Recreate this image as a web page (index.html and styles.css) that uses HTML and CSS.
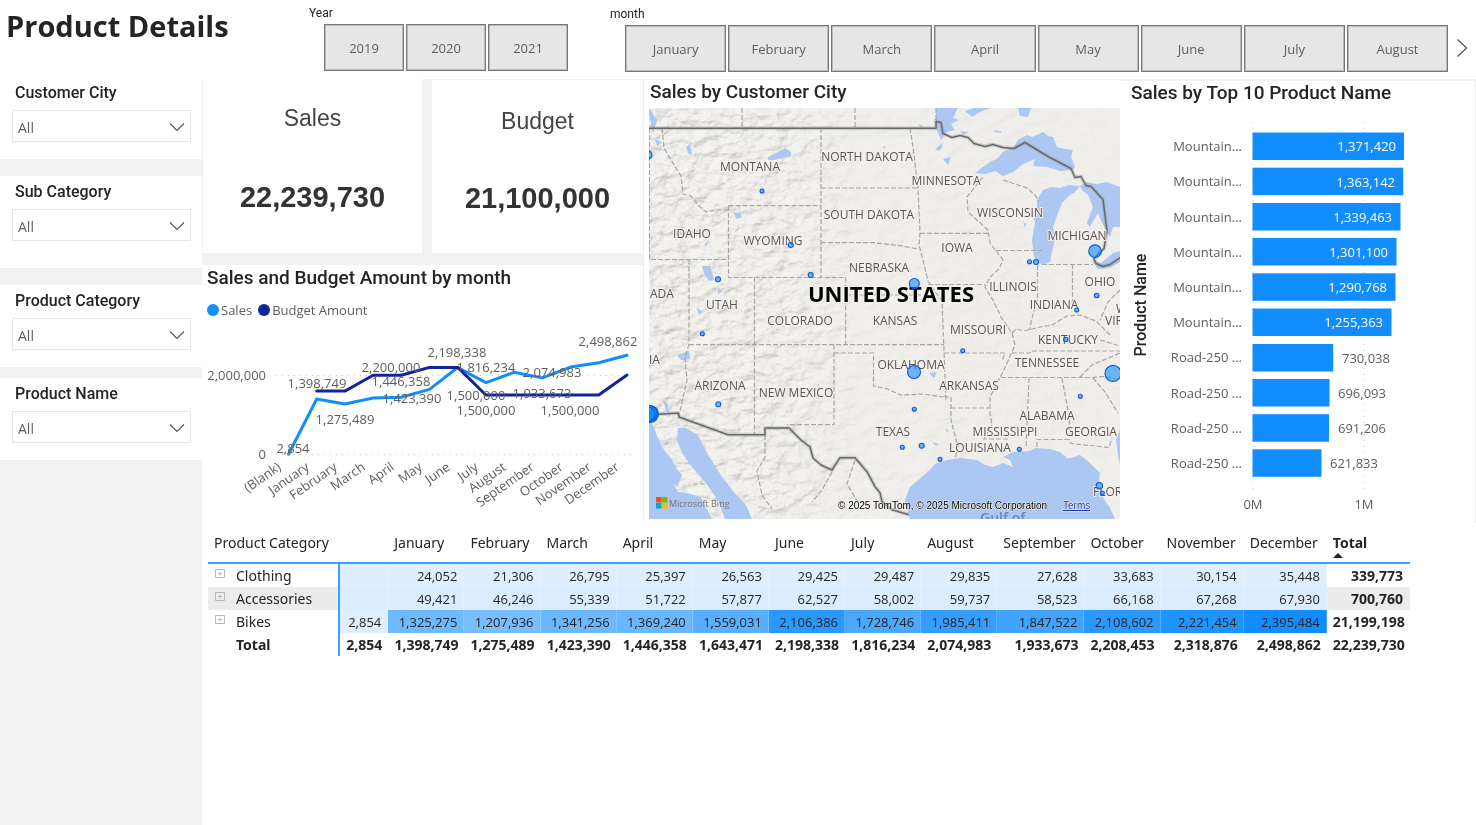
FILE: index.html
```html
<!DOCTYPE html>
<html lang="en">
<head>
<meta charset="utf-8">
<meta name="viewport" content="width=device-width, initial-scale=1">
<title>Product Details</title>
<link rel="stylesheet" href="styles.css">
</head>
<body>
<div class="page">
  <header class="topbar">
    <h1 class="page-title">Product Details</h1>
    <section class="tiles tiles-year" aria-labelledby="year-label">
      <h2 class="tiles-label" id="year-label">Year</h2>
      <div class="tile-row">
        <button type="button" class="tile">2019</button>
        <button type="button" class="tile">2020</button>
        <button type="button" class="tile">2021</button>
      </div>
    </section>
    <section class="tiles tiles-month" aria-labelledby="month-label">
      <h2 class="tiles-label" id="month-label">month</h2>
      <div class="tile-row">
        <button type="button" class="tile">January</button>
        <button type="button" class="tile">February</button>
        <button type="button" class="tile">March</button>
        <button type="button" class="tile">April</button>
        <button type="button" class="tile">May</button>
        <button type="button" class="tile">June</button>
        <button type="button" class="tile">July</button>
        <button type="button" class="tile">August</button>
        <button type="button" class="next" aria-label="Next months"><svg width="12" height="20" viewBox="0 0 12 20"><path d="M1.5 1.500 10.500 10 1.500 18.500" fill="none" stroke="#555" stroke-width="1.200"/></svg></button>
      </div>
    </section>
  </header>

  <aside class="sidebar">
    <div class="filter">
      <label for="f-city">Customer City</label>
      <div class="pick"><select id="f-city"><option>All</option></select><svg class="chev" width="16" height="10" viewBox="0 0 16 10"><path d="M1 1.500 8 8.500 15 1.500" fill="none" stroke="#555" stroke-width="1.100"/></svg></div>
    </div>
    <div class="filter filter-tall">
      <label for="f-sub">Sub Category</label>
      <div class="pick"><select id="f-sub"><option>All</option></select><svg class="chev" width="16" height="10" viewBox="0 0 16 10"><path d="M1 1.500 8 8.500 15 1.500" fill="none" stroke="#555" stroke-width="1.100"/></svg></div>
    </div>
    <div class="filter filter-close">
      <label for="f-cat">Product Category</label>
      <div class="pick"><select id="f-cat"><option>All</option></select><svg class="chev" width="16" height="10" viewBox="0 0 16 10"><path d="M1 1.500 8 8.500 15 1.500" fill="none" stroke="#555" stroke-width="1.100"/></svg></div>
    </div>
    <div class="filter">
      <label for="f-name">Product Name</label>
      <div class="pick"><select id="f-name"><option>All</option></select><svg class="chev" width="16" height="10" viewBox="0 0 16 10"><path d="M1 1.500 8 8.500 15 1.500" fill="none" stroke="#555" stroke-width="1.100"/></svg></div>
    </div>
  </aside>

  <main class="content">
    <div class="visuals">
      <div class="col-left">
        <div class="cards">
          <div class="card"><span class="card-label">Sales</span><strong class="card-value">22,239,730</strong></div>
          <div class="card card-lined"><span class="card-label">Budget</span><strong class="card-value">21,100,000</strong></div>
        </div>
        <section class="trend">
          <h2 class="visual-title">Sales and Budget Amount by month</h2>
          <div class="legend">
            <span class="key key-sales">Sales</span>
            <span class="key key-budget">Budget Amount</span>
          </div>
          <svg class="chart" viewBox="202 325 441 198" role="img" aria-label="Sales and budget by month">
            <g class="gridline"><path d="M276 375.500H636M276 454.500H636"/></g>
            <polyline class="line line-sales" points="288.500,454.200 316.700,399 344.900,404 373.100,398 401.300,397.200 429.500,389.400 457.700,367.500 485.900,382.600 514.100,372.300 542.300,377.900 570.500,367.100 598.700,362.700 627,355.300"/>
            <polyline class="line line-budget" points="316.700,391.100 344.900,391.100 373.100,375.300 401.300,375.300 429.500,367.400 457.700,367.400 485.900,395 598.700,395 627,375"/>
            <g class="num" text-anchor="end"><text x="266" y="380">2,000,000</text><text x="266" y="459">0</text></g>
            <g class="num" text-anchor="middle">
              <text x="293" y="453">2,854</text><text x="317" y="388">1,398,749</text><text x="345" y="424">1,275,489</text>
              <text x="391" y="372">2,200,000</text><text x="401" y="386">1,446,358</text><text x="412" y="403">1,423,390</text>
              <text x="457" y="357">2,198,338</text><text x="486" y="372">1,816,234</text><text x="476" y="400">1,500,000</text>
              <text x="486" y="415">1,500,000</text><text x="552" y="377">2,074,983</text><text x="542" y="398">1,933,673</text>
              <text x="570" y="415">1,500,000</text><text x="608" y="346">2,498,862</text>
            </g>
            <g class="num" text-anchor="end">
              <text transform="translate(282 469) rotate(-35)">(Blank)</text>
              <text transform="translate(310 469) rotate(-35)">January</text>
              <text transform="translate(338 469) rotate(-35)">February</text>
              <text transform="translate(366 469) rotate(-35)">March</text>
              <text transform="translate(395 469) rotate(-35)">April</text>
              <text transform="translate(423 469) rotate(-35)">May</text>
              <text transform="translate(451 469) rotate(-35)">June</text>
              <text transform="translate(479 469) rotate(-35)">July</text>
              <text transform="translate(507 469) rotate(-35)">August</text>
              <text transform="translate(535 469) rotate(-35)">September</text>
              <text transform="translate(564 469) rotate(-35)">October</text>
              <text transform="translate(592 469) rotate(-35)">November</text>
              <text transform="translate(620 469) rotate(-35)">December</text>
            </g>
          </svg>
        </section>
      </div>

      <section class="map">
        <h2 class="visual-title">Sales by Customer City</h2>
        <svg class="chart" viewBox="649 108 471 411" role="img" aria-label="Map of sales by customer city">
          <defs>
            <filter id="relief" x="0" y="0" width="100%" height="100%">
              <feTurbulence type="fractalNoise" baseFrequency="0.06 0.09" numOctaves="4" seed="8"/>
              <feDiffuseLighting surfaceScale="6" lighting-color="#ffffff"><feDistantLight azimuth="225" elevation="60"/></feDiffuseLighting>
            </filter>
            <linearGradient id="west" x1="0" x2="1" y1="0" y2="0"><stop offset="0" stop-color="#fff"/><stop offset=".3" stop-color="#ccc"/><stop offset=".45" stop-color="#333"/><stop offset="1" stop-color="#1a1a1a"/></linearGradient>
            <mask id="west-mask"><rect x="649" y="108" width="471" height="411" fill="url(#west)"/></mask>
          </defs>
          <rect x="649" y="108" width="471" height="411" fill="#f1efeb"/>
          <g mask="url(#west-mask)"><rect class="relief" x="649" y="108" width="471" height="411" filter="url(#relief)"/></g>
          <g fill="#abc7f2">
            <path d="M975 173l8-6 7-5 8-4 5-6 10-5 6-8 8-4 5 2 11-5 5 4 5 1 4 10 8 2 8 1-2 7 4 10-3 3-12 1-13-4-14-1 2-7-12 5-10 8-10 4-8-5-10 3z"/>
            <path d="M1037 200l6-10 8-3 9 1 9-3 11 1-5 6-5 3-8 8-4 10-5 14 2 12-2 8-3 15-8 3-8-8-2-17 3-17-2-10 4-6z"/>
            <path d="M1080 186l7-4 10 2 10-2 13 5v40h-7l-3 10-8-14-4-10-8 14-3-4 6-16-5-12-6-5z"/>
            <path d="M1092 260l9 3 12-10 7-2v11l-10 6-12 1z"/>
            <path d="M910 519l-5-19 5-13 20-17 5-6 12-4 13-2 17 2 8 5 8 2 10-4 10 4-3-7-7-3 10-5 17-1 5-3 15 1 10 3 7 6 4 0 9-3 10 8 10 10-2 14 4 9 8 12 5 11z"/>
            <path d="M1120 430l-4 9 2 16 2 10zM649 420l4 5 3 8 6 14 10 13 5 9 5 6-5 12-4-4 5 9 9 1 14 4 5 11 6 11h-64zM678 428l8 0 12 7 9 18 15 24 16 20 8 8 6 14h-27l-7-19-13-18-13-15-10-14-5-13z"/>
            <path d="M768 157l10-5 7-4 6 4v4l-8 2-10 2-5 0zM686 147l4-3 2 11-4-2zM655 139l7 4-5 3zM702 266l8 0 3 10 1 4-5 1-5-8zM734 213l6 0 2 4-6 2zM677 355l12-4 1 8-9 1zM704 244l5-3-3 5zM718 289l5 2-5 3zM697 308l6 4-4 3zM663 400l5 4 2 13-4-7zM649 108l8 12-4 14-4-20z"/>
            <path d="M936 108l22 0-5 10 6 2-8 4 4 6-8 2-6 8-5-12zM965 111l9-3 16 0-12 5-6 4zM1018 108l13 0-3 9-8-1zM935 149l7-6 0 5-3 3zM943 159l8-2-3 8zM960 131l9 1-6 3zM994 130l6 1 2 2-7-1zM1023 221l3 3-1 4zM929 373l8-1-3 6zM945 430l4 3-2-4zM932 442l7 2-3 2zM919 124l4 2-3 2zM883 146l3 1-2 2z"/>
          </g>
          <g class="state">
            <path d="M649.500 128V259.500H728.500M728.500 205.700V277.500H846M728.500 205.700H821M821 128V277.500M821 188H918M821 242.700H873l9 1 18 2 17 3M662 128l2 20 7 12 10 16 2 18 8 2 7 9 8 7 9-2 14 0M742 108V128M855 108V128M936 108V121"/>
            <path d="M689 259.500V344.700M754.500 277.500V434M689 344.700H944M845.700 277.500V344.700M846 295H936M834 344.700V424.700H787M834 353H873.500V386l14 3 13 6 23-1 20 3M689 344l-4 14 2 22-4 18-4 18"/>
            <path d="M910 128l3 19 5 41 2 45-1 12 4 15 5 21 8 12 6 8 2 50 2 50M920 233.300H988M928 284.500H985M944 353H1005l-3 8M951 397v23l7 27-3 12M951 408H989M944 396l7 2"/>
            <path d="M983 177l-16 20 1 15 20 18 2 13 13 17-4 9-9 8-5 10 8 13 8 17 11 16 3 12-8 18-7 15-10 19 0 16 2 12-8 14h25M1003 180l24 8 8 7 4 6M996 250.500H1042M1037.500 265V300l-6 20-2 10M1042 264.500H1093M1072.500 264V304M1120 290l-12 12-8 18"/>
            <path d="M1012 333l4-4 8 2 16-4 12-2 15-9 13-1 16 6 8 8 6 6M1012 353h18l2-2H1120M1001 377.500H1093l10-1 17 3M1029 378l-3 70M1062 378l7 38 1 20M1037 447v-7.500H1069l2 4 38 4 3-9M1093 378l12 14 13 21M1080 377l12-12 28-12M1100 340l20 6"/>
            <path d="M765 435v22l-8 14 5 24 10 14M832 472l-10 18-10 12M693 484h14M855 460l-8 24 12 20"/>
          </g>
          <path class="border-glow" d="M649 128.300H936V121.500l5 1 2 11 9 4 8-2 8 2 6 6 11 3 8-2 10 3 11 1 11-6 23 14 23 12 4 9 6-1 5 9 5 1 12 13 4 32-3 17-10 10 2 5 7 3 7-2 12-8M649 415l29-2 1 4 49 17.700h37v-6.700h24l12 12 9 7 3 11 8 7 11 5 8-12.300h15l12 14 8 15 5 6 2 9 10 8 17 5"/>
          <path class="border" d="M649 128.300H936V121.500l5 1 2 11 9 4 8-2 8 2 6 6 11 3 8-2 10 3 11 1 11-6 23 14 23 12 4 9 6-1 5 9 5 1 12 13 4 32-3 17-10 10 2 5 7 3 7-2 12-8M649 415l29-2 1 4 49 17.700h37v-6.700h24l12 12 9 7 3 11 8 7 11 5 8-12.300h15l12 14 8 15 5 6 2 9 10 8 17 5"/>
          <g class="place" text-anchor="middle">
            <text x="750" y="171">MONTANA</text><text x="867" y="161">NORTH DAKOTA</text><text x="869" y="219">SOUTH DAKOTA</text>
            <text x="946" y="185">MINNESOTA</text><text x="1010" y="217">WISCONSIN</text><text x="1077" y="240">MICHIGAN</text>
            <text x="692" y="238">IDAHO</text><text x="773" y="245">WYOMING</text><text x="957" y="252">IOWA</text>
            <text x="879" y="272">NEBRASKA</text><text x="1013" y="291">ILLINOIS</text><text x="1100" y="286">OHIO</text>
            <text x="722" y="309">UTAH</text><text x="800" y="325">COLORADO</text><text x="895" y="325">KANSAS</text>
            <text x="978" y="334">MISSOURI</text><text x="1054" y="309">INDIANA</text><text x="1068" y="344">KENTUCKY</text>
            <text x="911" y="369">OKLAHOMA</text><text x="1047" y="367">TENNESSEE</text><text x="969" y="390">ARKANSAS</text>
            <text x="720" y="390">ARIZONA</text><text x="796" y="397">NEW MEXICO</text><text x="1047" y="420">ALABAMA</text>
            <text x="893" y="436">TEXAS</text><text x="1005" y="436">MISSISSIPPI</text><text x="1091" y="436">GEORGIA</text><text x="980" y="452">LOUISIANA</text>
          </g>
          <g class="place"><text x="650" y="298">ADA</text><text x="649" y="364">IA</text><text x="1105" y="325">VIRGINIA</text><text x="1116" y="313">W</text><text x="1093" y="496">FLORIDA</text></g>
          <text class="sea" x="980" y="523">Gulf of</text>
          <text class="country" x="891" y="302" text-anchor="middle">UNITED STATES</text>
          <g class="bubble">
            <circle cx="648" cy="155" r="4"/><circle cx="762" cy="191" r="2"/><circle cx="790.700" cy="245" r="2.500"/><circle cx="810.700" cy="275" r="2.500"/><circle cx="718" cy="279.300" r="2.500"/>
            <circle cx="1095" cy="251.200" r="6.300"/><circle cx="1029.500" cy="261.700" r="2"/><circle cx="1036" cy="262" r="2.500"/><circle cx="914.300" cy="283.500" r="5"/><circle cx="1096.700" cy="295.500" r="2.300"/>
            <circle cx="702.300" cy="333.700" r="2"/><circle cx="718.300" cy="404.300" r="2.500"/><circle cx="1076.700" cy="310" r="2"/><circle cx="1065.700" cy="339.500" r="2.200"/><circle cx="962.700" cy="350.700" r="2"/>
            <circle cx="914" cy="372" r="6.500"/><circle cx="1113" cy="373.400" r="8"/><circle cx="1080.300" cy="396.300" r="2"/><circle cx="914.300" cy="409.300" r="2"/><circle cx="902.300" cy="447.300" r="2"/>
            <circle cx="921.700" cy="445.700" r="2.500"/><circle cx="940" cy="459.300" r="2"/><circle cx="1019.300" cy="449.300" r="2"/><circle cx="1099.300" cy="485.700" r="3.200"/><circle cx="1102.300" cy="493" r="2"/>
            <g fill-opacity="1"><circle cx="650" cy="414" r="8.500"/><circle cx="649" cy="413.500" r="8"/><circle cx="648" cy="414" r="7"/></g>
          </g>
          <g><path fill="#f25022" d="M656 497h5.500v5.500H656z"/><path fill="#7fba00" d="M662 497h5.500v5.500H662z"/><path fill="#00a4ef" d="M656 503h5.500v5.500H656z"/><path fill="#ffb900" d="M662 503h5.500v5.500H662z"/></g>
          <text class="bing" x="669" y="507">Microsoft Bing</text>
          <text class="credit" x="838" y="509">© 2025 TomTom, © 2025 Microsoft Corporation</text>
          <a href="#terms"><text class="credit terms" x="1063" y="509">Terms</text></a>
        </svg>
      </section>

      <section class="top10">
        <h2 class="visual-title">Sales by Top 10 Product Name</h2>
        <svg class="chart" viewBox="1120 109 355 411" role="img" aria-label="Sales by top 10 product name">
          <g class="gridline"><path d="M1253 122V494M1364 122V494"/></g>
          <g class="bar">
            <rect x="1252.500" y="132.500" width="151.500" height="27.500"/><rect x="1252.500" y="167.700" width="150.700" height="27.500"/>
            <rect x="1252.500" y="203" width="148" height="27.500"/><rect x="1252.500" y="238" width="144" height="27.500"/>
            <rect x="1252.500" y="273.300" width="143" height="27.500"/><rect x="1252.500" y="308.500" width="139" height="27.500"/>
            <rect x="1252.500" y="344" width="80.700" height="27.500"/><rect x="1252.500" y="379" width="77" height="27.500"/>
            <rect x="1252.500" y="414.200" width="76.500" height="27.500"/><rect x="1252.500" y="449.300" width="69" height="27.500"/>
          </g>
          <g class="num num-in" text-anchor="end"><text x="1396" y="151">1,371,420</text><text x="1395" y="187">1,363,142</text><text x="1392" y="222">1,339,463</text><text x="1388" y="257">1,301,100</text><text x="1387" y="292">1,290,768</text><text x="1383" y="327">1,255,363</text></g>
          <g class="num"><text x="1342" y="363">730,038</text><text x="1338" y="398">696,093</text><text x="1338" y="433">691,206</text><text x="1330" y="468">621,833</text></g>
          <g class="num" text-anchor="end"><text x="1242" y="151">Mountain...</text><text x="1242" y="186">Mountain...</text><text x="1242" y="222">Mountain...</text><text x="1242" y="257">Mountain...</text><text x="1242" y="292">Mountain...</text><text x="1242" y="327">Mountain...</text><text x="1242" y="362">Road-250 ...</text><text x="1242" y="398">Road-250 ...</text><text x="1242" y="433">Road-250 ...</text><text x="1242" y="468">Road-250 ...</text></g>
          <g class="num" text-anchor="middle"><text x="1253" y="509">0M</text><text x="1364" y="509">1M</text></g>
          <text class="axis-title" transform="translate(1146 305) rotate(-90)" text-anchor="middle">Product Name</text>
        </svg>
      </section>
    </div>

    <table class="matrix">
      <colgroup><col class="c-cat"><col class="c-blank"><col span="8" class="c-month"><col class="c-sep"><col class="c-month"><col class="c-wide"><col class="c-wide"><col class="c-wide"></colgroup>
      <thead>
        <tr><th scope="col">Product Category</th><th></th><th scope="col">January</th><th scope="col">February</th><th scope="col">March</th><th scope="col">April</th><th scope="col">May</th><th scope="col">June</th><th scope="col">July</th><th scope="col">August</th><th scope="col">September</th><th scope="col">October</th><th scope="col">November</th><th scope="col">December</th><th scope="col" class="sorted">Total</th></tr>
      </thead>
      <tbody>
        <tr><th scope="row"><button type="button" class="expand" aria-label="Expand Clothing"><svg width="10" height="9" viewBox="0 0 10 9"><path d="M.5.500h9v8h-9zM5 2.500v4M3 4.500h4" fill="none" stroke="#b8b8b8"/></svg></button>Clothing</th><td></td><td>24,052</td><td>21,306</td><td>26,795</td><td>25,397</td><td>26,563</td><td>29,425</td><td>29,487</td><td>29,835</td><td>27,628</td><td>33,683</td><td>30,154</td><td>35,448</td><td>339,773</td></tr>
        <tr class="alt"><th scope="row"><button type="button" class="expand" aria-label="Expand Accessories"><svg width="10" height="9" viewBox="0 0 10 9"><path d="M.5.500h9v8h-9zM5 2.500v4M3 4.500h4" fill="none" stroke="#b8b8b8"/></svg></button>Accessories</th><td></td><td>49,421</td><td>46,246</td><td>55,339</td><td>51,722</td><td>57,877</td><td>62,527</td><td>58,002</td><td>59,737</td><td>58,523</td><td>66,168</td><td>67,268</td><td>67,930</td><td>700,760</td></tr>
        <tr><th scope="row"><button type="button" class="expand" aria-label="Expand Bikes"><svg width="10" height="9" viewBox="0 0 10 9"><path d="M.5.500h9v8h-9zM5 2.500v4M3 4.500h4" fill="none" stroke="#b8b8b8"/></svg></button>Bikes</th><td>2,854</td><td style="--heat:55%">1,325,275</td><td style="--heat:50%">1,207,936</td><td style="--heat:56%">1,341,256</td><td style="--heat:57%">1,369,240</td><td style="--heat:65%">1,559,031</td><td style="--heat:88%">2,106,386</td><td style="--heat:72%">1,728,746</td><td style="--heat:83%">1,985,411</td><td style="--heat:77%">1,847,522</td><td style="--heat:88%">2,108,602</td><td style="--heat:93%">2,221,454</td><td style="--heat:100%">2,395,484</td><td>21,199,198</td></tr>
      </tbody>
      <tfoot>
        <tr><th scope="row">Total</th><td>2,854</td><td>1,398,749</td><td>1,275,489</td><td>1,423,390</td><td>1,446,358</td><td>1,643,471</td><td>2,198,338</td><td>1,816,234</td><td>2,074,983</td><td>1,933,673</td><td>2,208,453</td><td>2,318,876</td><td>2,498,862</td><td>22,239,730</td></tr>
      </tfoot>
    </table>
  </main>
</div>
</body>
</html>
```

FILE: styles.css
```css
* { box-sizing: border-box; }

body {
  margin: 0;
  background: #fff;
  color: #252423;
  font-family: "Open Sans", "Noto Sans", sans-serif;
  font-size: 14px;
}

h1, h2 { margin: 0; }

.page {
  display: grid;
  grid-template-columns: 202px 1fr;
  grid-template-rows: auto 1fr;
  min-height: 100vh;
}

/* Header with the tile slicers */
.topbar {
  grid-column: 1 / -1;
  display: grid;
  grid-template-columns: 309px 301px 1fr;
  height: 77px;
}

.page-title {
  padding: 6px;
  font-size: 29px;
  line-height: 40px;
  font-weight: 700;
}

.tiles { padding-top: 6px; }
.tiles-month { padding-top: 7px; }

.tiles-label { font: 400 12px/14px Roboto, sans-serif; }

.tile-row {
  display: flex;
  gap: 2px;
  padding-left: 15px;
  margin-top: 4px;
}

.tile {
  flex: 1;
  height: 47px;
  padding: 0;
  border: 1px solid #777;
  outline: 1px solid #bbb;
  outline-offset: -2px;
  background: #e6e6e6;
  color: #605e5c;
  font: inherit;
  font-size: 13px;
}

.tiles-year .tile { flex: 0 0 80px; }

.next {
  width: 26px;
  padding: 0 0 2px;
  border: 0;
  background: none;
}

.next svg { display: block; margin: 0 auto 0 6px; }

/* Sidebar filters */
.sidebar {
  display: flex;
  flex-direction: column;
  align-items: stretch;
  gap: 17px;
  background: #f1f1f1;
}

.filter {
  height: 82px;
  padding: 6px 11px 0 12px;
  background: #fff;
}

.filter-tall { height: 92px; }
.filter-close { margin-bottom: -6px; }

.filter label {
  display: block;
  padding-left: 3px;
  margin-bottom: 7px;
  font: 500 16px/20px Roboto, sans-serif;
}

.pick { display: grid; align-items: center; }

.pick select,
.chev { grid-area: 1 / 1; }

.pick select {
  appearance: none;
  height: 32px;
  padding: 2px 5px 0;
  border: 1px solid #e6e6e6;
  border-radius: 0;
  background: #fff;
  color: #605e5c;
  font: inherit;
}

.chev {
  justify-self: end;
  margin-right: 6px;
  margin-top: 2px;
  pointer-events: none;
}

/* Visuals */
.content { padding-top: 2px; }

.visuals {
  display: grid;
  grid-template-columns: 442fr 476fr 356fr;
}

.col-left { border-right: 1px solid #eee; }

.cards {
  display: grid;
  grid-template-columns: 220fr 211fr;
  gap: 10px;
  padding-bottom: 12px;
  background: #f1f1f1;
}

.card {
  display: flex;
  flex-direction: column;
  align-items: center;
  gap: 46px;
  height: 174px;
  padding-top: 24px;
  border-left: 1px solid #f1f1f1;
  background: #fff;
  font-family: "Liberation Sans", Arial, sans-serif;
}

.card-lined {
  padding-top: 26px;
  border-top: 1px solid #f1f1f1;
  border-left: 0;
}

.card-label {
  color: #444;
  font-size: 23px;
  line-height: 30px;
}

.card-value {
  color: #333;
  font-size: 29px;
  line-height: 36px;
}

.card-lined .card-value { margin-top: -2px; }

.visual-title {
  font: 500 19px/26px Roboto, sans-serif;
  color: #252423;
}

.trend .visual-title { padding-left: 5px; }

.legend {
  display: flex;
  gap: 6px;
  padding: 9px 5px 5px;
  color: #605e5c;
  font-size: 13px;
  line-height: 20px;
}

.key { display: flex; align-items: center; gap: 2px; }

.key::before {
  content: "";
  width: 12px;
  height: 12px;
  border-radius: 50%;
  background: #118dff;
}

.key-budget::before { background: #12239e; }

.map {
  padding: 0 0 0 5px;
  border-top: 1px solid #f1f1f1;
}

.map .visual-title { padding: 0 0 4px 1px; line-height: 24px; }

.top10 {
  border-top: 2px solid #f1f1f1;
  border-right: 1px solid #f1f1f1;
}

.top10 .visual-title { padding: 0 0 4px 11px; line-height: 24px; }

.chart { display: block; width: 100%; height: auto; }

.gridline { fill: none; stroke: #c8c6c4; stroke-dasharray: 1 5; }

.line {
  fill: none;
  stroke-width: 3;
  stroke-linejoin: round;
  stroke-linecap: round;
}

.line-sales { stroke: #118dff; }
.line-budget { stroke: #12239e; }
.num { fill: #605e5c; font-size: 13px; }
.num-in { fill: #fff; }
.axis-title { fill: #252423; font: 500 16px Roboto, sans-serif; }
.bar { fill: #118dff; }

/* Map layers */
.relief { opacity: .35; mix-blend-mode: multiply; }
.state { fill: none; stroke: #aaa7a2; stroke-width: 1.2; stroke-dasharray: 5 2; }
.border-glow { fill: none; stroke: #999; stroke-opacity: .35; stroke-width: 4; }
.border { fill: none; stroke: #686a69; stroke-width: 1.5; stroke-linejoin: round; }

.place {
  fill: #5c5350;
  stroke: #f4f2ef;
  stroke-width: 2px;
  paint-order: stroke;
  font-size: 12px;
  font-weight: 500;
}

.country {
  fill: #000;
  stroke: #f4f2ef;
  stroke-width: 2px;
  paint-order: stroke;
  font-size: 22px;
  font-weight: 700;
}

.sea { fill: #6888b8; font-size: 14px; font-weight: 600; }
.bubble { fill: #118dff; fill-opacity: .6; stroke: #0f5bd5; stroke-width: 1.1; }
.bing { fill: #777; font-size: 9px; font-weight: 500; }

.credit {
  fill: #000;
  stroke: #f4f2ef;
  stroke-width: 1px;
  paint-order: stroke;
  font: 10px "Liberation Sans", Arial, sans-serif;
}

.terms { fill: #2038a8; text-decoration: underline; }

/* Matrix */
.matrix {
  table-layout: fixed;
  width: 1202px;
  margin: 4px 0 0 6px;
  border-collapse: separate;
  border-spacing: 0;
}

.c-cat { width: 132px; }
.c-blank { width: 48px; }
.c-month { width: 76px; }
.c-sep { width: 87px; }
.c-wide { width: 83px; }

.matrix th,
.matrix td { padding: 0 6px; white-space: nowrap; }

.matrix th {
  text-align: left;
  font-family: "Noto Sans", "Open Sans", sans-serif;
  font-weight: 400;
}

.matrix thead th {
  height: 37px;
  padding-bottom: 4px;
  border-bottom: 2px solid #3f9fff;
}

.matrix thead .sorted { position: relative; font-weight: 700; }

.sorted::after {
  content: "";
  position: absolute;
  left: 6px;
  bottom: 4px;
  border: 5px solid transparent;
  border-top: 0;
  border-bottom-color: #252423;
}

.matrix tbody th,
.matrix tbody td,
.matrix tfoot th,
.matrix tfoot td { height: 23px; line-height: 22px; }

.matrix tbody th,
.matrix tfoot th { border-right: 2px solid #3f9fff; }

.matrix td { text-align: right; font-size: 13px; }

.matrix tbody td {
  background: color-mix(in srgb, #118dff var(--heat, 0%), #deeeff);
  border-right: 1px solid #ffffff33;
}

.matrix .alt td { --heat: 2%; }

.matrix tbody td:last-child {
  background: #fff;
  font-size: 14px;
  font-weight: 700;
}

.matrix .alt th,
.matrix .alt td:last-child { background: #ececec; }

.matrix tfoot td,
.matrix tfoot th { font-size: 14px; font-weight: 700; }

.matrix tfoot th { padding-left: 28px; }

.expand {
  width: 22px;
  height: 14px;
  padding: 0 0 0 1px;
  border: 0;
  background: none;
  text-align: left;
}

.expand svg { display: block; }
```
